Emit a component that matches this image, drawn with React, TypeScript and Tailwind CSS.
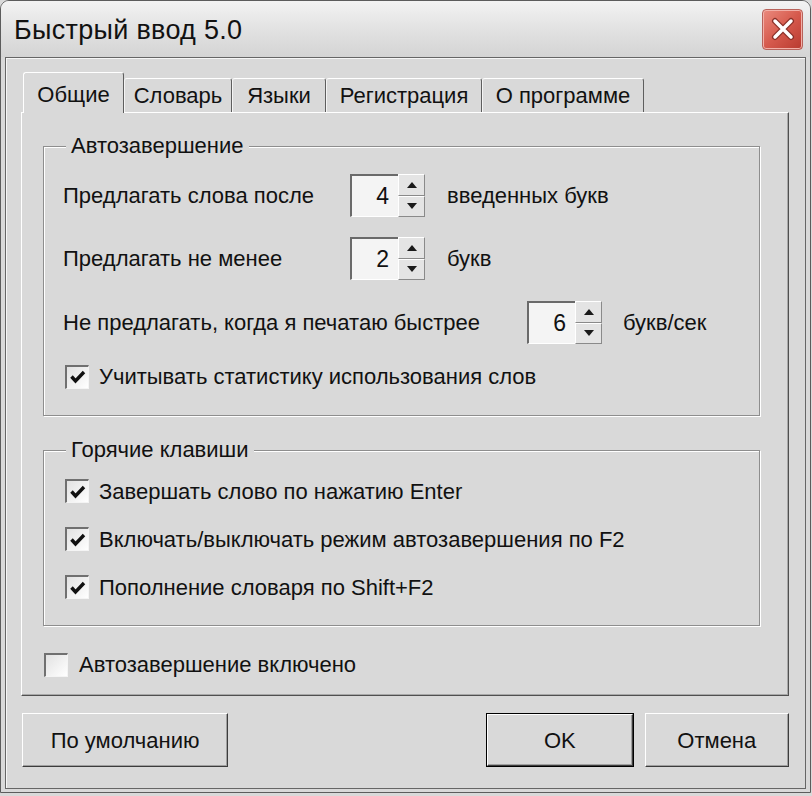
import React from 'react';

const SANS = "font-['Liberation_Sans',Arial,sans-serif]";

function CheckMark() {
  return (
    <svg width="16" height="14" viewBox="0 0 16 14">
      <path d="M1.5 6.5 L5.5 11 L14 2" fill="none" stroke="#111" strokeWidth="3.4" />
    </svg>
  );
}

function CheckBox({ checked }: { checked?: boolean }) {
  return (
    <div className="w-[24px] h-[24px] shrink-0 border-l-2 border-t-2 border-[#707070] border-r border-b border-r-[#f4f4f4] border-b-[#f4f4f4] bg-gradient-to-br from-[#e2e2e2] to-[#ffffff] flex items-center justify-center">
      {checked && <CheckMark />}
    </div>
  );
}

function Arrow({ up }: { up?: boolean }) {
  return (
    <div className="flex-1 bg-[#e4e4e4] border-t border-l border-t-white border-l-white border-b border-r border-b-[#8a8a8a] border-r-[#8a8a8a] flex items-center justify-center">
      <svg width="10" height="6" viewBox="0 0 10 6">
        {up ? <path d="M0 6 L5 0 L10 6 Z" fill="#1a1a1a" /> : <path d="M0 0 L5 6 L10 0 Z" fill="#1a1a1a" />}
      </svg>
    </div>
  );
}

function Spinner({ value }: { value: string }) {
  return (
    <div className="flex h-[43px] shrink-0">
      <div className="w-[48px] h-full bg-[#f4f4f4] border-l-2 border-t-2 border-[#6a6a6a] border-r-0 border-b border-b-white flex items-center justify-end pr-[9px] text-[23px]">
        {value}
      </div>
      <div className="w-[27px] flex flex-col">
        <Arrow up />
        <Arrow />
      </div>
    </div>
  );
}

function GroupBox({ title, className, children }: { title: string; className: string; children: React.ReactNode }) {
  return (
    <div className={`relative border border-[#8e8e8e] shadow-[inset_1px_1px_0_#ffffff,1px_1px_0_#ffffff] ${className}`}>
      <span className="absolute left-[22px] top-[-15px] px-[5px] bg-[#d9d9d9] text-[22px] leading-[28px]">{title}</span>
      {children}
    </div>
  );
}

function Tab({ label, width, selected }: { label: string; width: string; selected?: boolean }) {
  if (selected) {
    return (
      <div className={`${width} h-[41px] relative z-10 bg-[#d9d9d9] border-l border-t border-l-white border-t-white border-r border-r-[#5e5e5e] rounded-t-[3px] flex items-start justify-center pt-[5px] text-[22px]`}>
        {label}
      </div>
    );
  }
  return (
    <div className={`${width} h-[34px] mb-px bg-[#d9d9d9] border-t border-t-white border-l border-l-[#f4f4f4] border-r border-r-[#5e5e5e] rounded-t-[3px] flex items-center justify-center text-[22px]`}>
      {label}
    </div>
  );
}

function Button({ label, className, isDefault }: { label: string; className: string; isDefault?: boolean }) {
  return (
    <div className={`${className} h-[54px] ${isDefault ? 'border border-black' : ''}`}>
      <div className="w-full h-full bg-[#d9d9d9] border-t border-l border-t-white border-l-white border-r border-b border-r-[#3c3c3c] border-b-[#3c3c3c] shadow-[inset_-1px_-1px_0_#a0a0a0] flex items-center justify-center text-[22px]">
        {label}
      </div>
    </div>
  );
}

export default function App() {
  return (
    <div className={`w-[812px] h-[796px] bg-[#d9d9d9] overflow-hidden text-[#111] ${SANS}`}>
      <div className="w-[811px] h-[793px] border border-[#5c5c5c] rounded-t-[9px] flex flex-col bg-[#d9d9d9]">
        {/* title bar */}
        <div className="h-[56px] shrink-0 rounded-t-[8px] bg-gradient-to-b from-[#f3f3f3] via-[#e2e2e2] to-[#d4d4d4] flex items-center justify-between pl-[13px] pr-[7px]">
          <span className="text-[27px] tracking-[0.3px] pt-[2px]">Быстрый ввод 5.0</span>
          <div className="w-[41px] h-[41px] rounded-[4px] border border-[#b8625a] bg-gradient-to-br from-[#ea8a7e] via-[#d65a4d] to-[#b8392f] shadow-[inset_0_0_0_1px_#f2b0a8] flex items-center justify-center">
            <svg width="26" height="26" viewBox="0 0 26 26">
              <path d="M5 5 L21 21 M21 5 L5 21" stroke="#8a3028" strokeWidth="6" strokeLinecap="round" />
              <path d="M5 5 L21 21 M21 5 L5 21" stroke="#ffffff" strokeWidth="3.5" strokeLinecap="round" />
            </svg>
          </div>
        </div>

        {/* client area */}
        <div className="flex-1 mx-[4px] mb-[3px] border border-[#666666] shadow-[inset_1px_1px_0_#f6f6f6] flex flex-col pl-[15px] pr-[16px] pt-[14px]">
          {/* tabs */}
          <div className="flex items-end h-[41px] -mb-px ml-[2px] relative z-10">
            <Tab label="Общие" width="w-[101px]" selected />
            <Tab label="Словарь" width="w-[108px]" />
            <Tab label="Языки" width="w-[94px]" />
            <Tab label="Регистрация" width="w-[156px]" />
            <Tab label="О программе" width="w-[162px]" />
          </div>

          {/* tab panel */}
          <div className="w-[768px] h-[584px] border border-t-white border-l-white border-r-[#505050] border-b-[#505050] shadow-[inset_-1px_-1px_0_#a8a8a8] flex flex-col text-[22px]">
            <GroupBox title="Автозавершение" className="mt-[33px] ml-[21px] w-[717px] h-[270px] pt-[27px] pl-[19px]">
              <div className="flex items-center h-[43px]">
                <span className="w-[287px]">Предлагать слова после</span>
                <Spinner value="4" />
                <span className="ml-[22px]">введенных букв</span>
              </div>
              <div className="flex items-center h-[43px] mt-[20px]">
                <span className="w-[287px]">Предлагать не менее</span>
                <Spinner value="2" />
                <span className="ml-[22px]">букв</span>
              </div>
              <div className="flex items-center h-[43px] mt-[21px]">
                <span className="w-[464px]">Не предлагать, когда я печатаю быстрее</span>
                <Spinner value="6" />
                <span className="ml-[21px]">букв/сек</span>
              </div>
              <div className="flex items-center gap-[10px] mt-[16px] ml-[2px]">
                <CheckBox checked />
                <span>Учитывать статистику использования слов</span>
              </div>
            </GroupBox>

            <GroupBox title="Горячие клавиши" className="mt-[34px] ml-[21px] w-[717px] h-[176px] pt-[28px] pl-[21px]">
              <div className="flex items-center gap-[10px] h-[24px]">
                <CheckBox checked />
                <span>Завершать слово по нажатию Enter</span>
              </div>
              <div className="flex items-center gap-[10px] h-[24px] mt-[24px]">
                <CheckBox checked />
                <span>Включать/выключать режим автозавершения по F2</span>
              </div>
              <div className="flex items-center gap-[10px] h-[24px] mt-[24px]">
                <CheckBox checked />
                <span>Пополнение словаря по Shift+F2</span>
              </div>
            </GroupBox>

            <div className="flex items-center gap-[11px] mt-[22px] ml-[22px]">
              <CheckBox />
              <span>Автозавершение включено</span>
            </div>
          </div>

          {/* buttons */}
          <div className="flex mt-[17px] ml-[1px]">
            <Button label="По умолчанию" className="w-[207px]" />
            <Button label="OK" className="w-[148px] ml-[258px]" isDefault />
            <Button label="Отмена" className="w-[145px] ml-[11px]" />
          </div>
        </div>
      </div>
    </div>
  );
}
